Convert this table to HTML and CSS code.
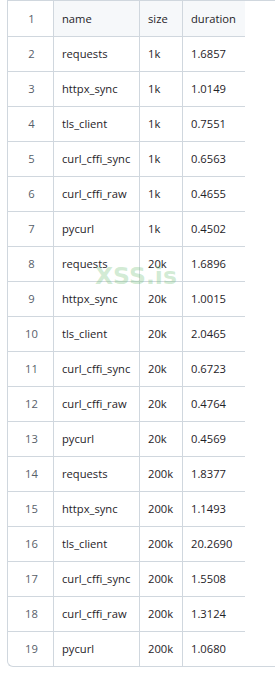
FILE: index.html
```html
<!DOCTYPE html>
<html>
<head>
<meta charset="utf-8">
<link rel="stylesheet" href="styles.css">
</head>
<body>
<div class="wrap">
<table class="grid">
<tbody>
<tr class="head"><td class="num">1</td><td class="c-name">name</td><td class="c-size">size</td><td class="c-dur">duration</td></tr>
<tr><td class="num">2</td><td>requests</td><td>1k</td><td>1.6857</td></tr>
<tr><td class="num">3</td><td>httpx_sync</td><td>1k</td><td>1.0149</td></tr>
<tr><td class="num">4</td><td>tls_client</td><td>1k</td><td>0.7551</td></tr>
<tr><td class="num">5</td><td>curl_cffi_sync</td><td>1k</td><td>0.6563</td></tr>
<tr><td class="num">6</td><td>curl_cffi_raw</td><td>1k</td><td>0.4655</td></tr>
<tr><td class="num">7</td><td>pycurl</td><td>1k</td><td>0.4502</td></tr>
<tr><td class="num">8</td><td>requests</td><td>20k</td><td>1.6896</td></tr>
<tr><td class="num">9</td><td>httpx_sync</td><td>20k</td><td>1.0015</td></tr>
<tr><td class="num">10</td><td>tls_client</td><td>20k</td><td>2.0465</td></tr>
<tr><td class="num">11</td><td>curl_cffi_sync</td><td>20k</td><td>0.6723</td></tr>
<tr><td class="num">12</td><td>curl_cffi_raw</td><td>20k</td><td>0.4764</td></tr>
<tr><td class="num">13</td><td>pycurl</td><td>20k</td><td>0.4569</td></tr>
<tr><td class="num">14</td><td>requests</td><td>200k</td><td>1.8377</td></tr>
<tr><td class="num">15</td><td>httpx_sync</td><td>200k</td><td>1.1493</td></tr>
<tr><td class="num">16</td><td>tls_client</td><td>200k</td><td>20.2690</td></tr>
<tr><td class="num">17</td><td>curl_cffi_sync</td><td>200k</td><td>1.5508</td></tr>
<tr><td class="num">18</td><td>curl_cffi_raw</td><td>200k</td><td>1.3124</td></tr>
<tr class="last"><td class="num">19</td><td>pycurl</td><td>200k</td><td>1.0680</td></tr>
</tbody>
</table>
<div class="mark">XSS.is</div>
</div>
</body>
</html>
```
FILE: styles.css
```css
html, body {
  margin: 0;
  padding: 0;
  background: #ffffff;
  overflow: hidden;
}
body {
  font-family: "Open Sans", "Noto Sans", sans-serif;
  font-size: 11.2px;
  color: #1f2328;
}
.wrap {
  position: relative;
  margin-left: 7px;
  border-top: 1px solid #d0d7de;
  border-left: 1px solid #d0d7de;
  border-bottom: 1px solid #d0d7de;
  border-bottom-left-radius: 6px;
}
.grid {
  border-collapse: separate;
  border-spacing: 0;
  table-layout: fixed;
  width: 237px;
}
.grid td {
  height: 35px;
  padding: 0 0 0 8px;
  box-sizing: border-box;
  border-bottom: 1px solid #d0d7de;
  border-right: 1px solid #d0d7de;
  vertical-align: middle;
  white-space: nowrap;
  line-height: 16px;
}
.grid td:nth-child(1) { width: 46px; }
.grid td:nth-child(2) { width: 86px; }
.grid td:nth-child(3) { width: 43px; }
.grid td:nth-child(4) { width: 62px; border-right: none; }
.grid .head td { height: 36px; }
.grid .head td:not(.num) { background: #f6f8fa; }
.grid .last td { border-bottom: none; height: 34px; }
.grid td.num {
  text-align: center;
  padding: 0 0 0 2px;
  color: #57606a;
}
.mark {
  position: absolute;
  left: 87px;
  top: 261px;
  font-family: "DejaVu Sans", sans-serif;
  font-weight: bold;
  font-size: 23.5px;
  line-height: 28px;
  color: rgba(102, 187, 106, 0.3);
  pointer-events: none;
}
```
